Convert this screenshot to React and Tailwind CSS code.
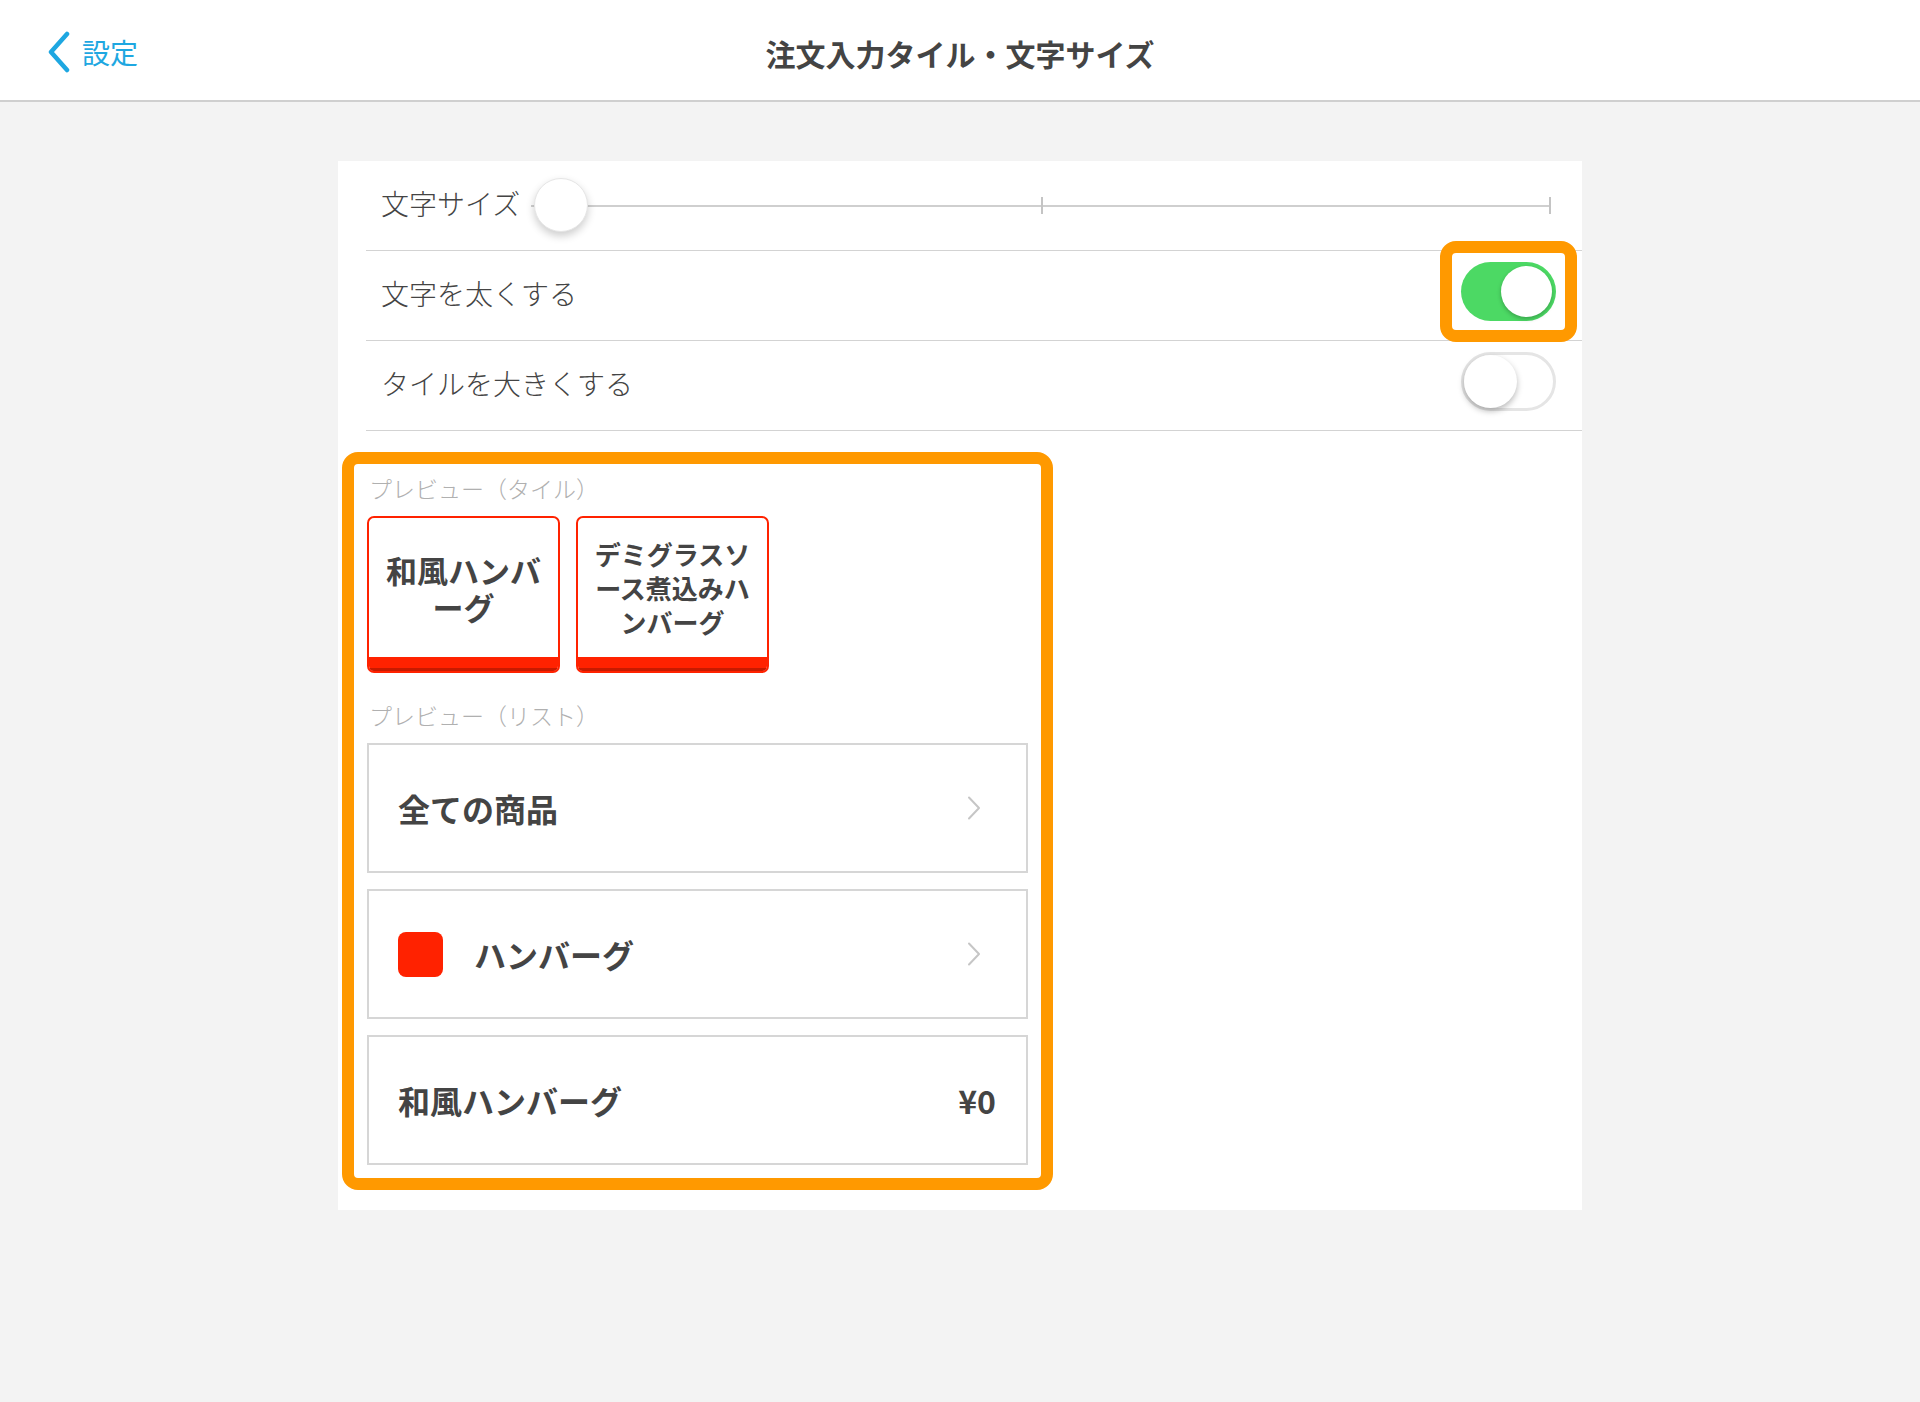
import React from "react";

// 注文入力タイル・文字サイズ settings screen
function Toggle({ on }) {
  if (on) {
    return (
      <div className="w-[95px] h-[59px] rounded-full bg-[#4cd964] p-[4px] flex justify-end">
        <div className="w-[51px] h-[51px] rounded-full bg-white shadow-[0_2px_4px_rgba(0,0,0,0.25)]" />
      </div>
    );
  }
  return (
    <div className="w-[95px] h-[59px] rounded-full bg-white border-[3px] border-[#e5e5e5] flex justify-start">
      <div className="w-[53px] h-[53px] rounded-full bg-white shadow-[0_3px_6px_rgba(0,0,0,0.28)]" />
    </div>
  );
}

function Chevron() {
  return (
    <svg width="14" height="24" viewBox="0 0 14 24" fill="none">
      <path d="M2 1.5 L12 12 L2 22.5" stroke="#c6c6c6" strokeWidth="2" strokeLinecap="round" strokeLinejoin="round" />
    </svg>
  );
}

function Tile({ lines, size }) {
  return (
    <div className="w-[193px] h-[157px] border-2 border-[#ff2200] rounded-[7px] overflow-hidden flex flex-col bg-white">
      <div className={`flex-1 flex flex-col items-center justify-center text-center font-bold text-[#444] ${size}`}>
        {lines.map((l) => (
          <div key={l}>{l}</div>
        ))}
      </div>
      <div className="h-[14px] bg-[#ff2200] border-b-[3px] border-[#c81a00]" />
    </div>
  );
}

function ListRow({ children }) {
  return (
    <div className="h-[130px] border-2 border-[#d6d6d6] bg-white flex items-center text-[32px] font-bold text-[#444]">
      {children}
    </div>
  );
}

export default function App() {
  return (
    <div className="min-h-[1402px] bg-[#f3f3f3] font-['Noto_Sans_CJK_JP',sans-serif]">
      {/* Header */}
      <header className="h-[102px] bg-white border-b-2 border-[#cfcfcf] grid grid-cols-[1fr_auto_1fr] items-center">
        <div className="flex items-center pl-[47px] gap-[11px] pt-[4px]">
          <svg width="24" height="42" viewBox="0 0 24 42" fill="none">
            <path d="M20 3 L4 21 L20 39" stroke="#1ea7e1" strokeWidth="4.5" strokeLinecap="round" strokeLinejoin="round" />
          </svg>
          <span className="text-[28px] text-[#1ea7e1] leading-none">設定</span>
        </div>
        <h1 className="text-[30px] font-bold text-[#444] leading-none pt-[6px]">注文入力タイル・文字サイズ</h1>
        <div />
      </header>

      {/* Card */}
      <main className="pt-[59px]">
        <div className="mx-auto w-[1244px] bg-white pb-[20px]">
          {/* 文字サイズ */}
          <div className="ml-[28px] h-[90px] border-b border-[#d3d3d3] flex items-center pl-[15px]">
            <span className="w-[150px] shrink-0 text-[28px] font-light text-[#444] pb-[5px]">文字サイズ</span>
            <div className="relative flex-1 h-[56px] mr-[31px]">
              <div className="absolute left-0 right-0 top-[27px] h-[2px] bg-[#cfcfcf]" />
              <div className="absolute left-1/2 top-[19px] w-[2px] h-[17px] bg-[#c4c4c4]" />
              <div className="absolute right-0 top-[19px] w-[2px] h-[17px] bg-[#c4c4c4]" />
              <div className="absolute left-[3px] top-0 w-[54px] h-[54px] rounded-full bg-white border border-[#e6e6e6] shadow-[0_4px_8px_rgba(0,0,0,0.2)]" />
            </div>
          </div>

          {/* 文字を太くする */}
          <div className="ml-[28px] h-[90px] border-b border-[#d3d3d3] flex items-center justify-between pl-[15px] pr-[26px]">
            <span className="text-[28px] font-light text-[#444] pb-[5px]">文字を太くする</span>
            <div className="relative mb-[8px]">
              <Toggle on />
              <div className="absolute -inset-[21px] border-[12px] border-[#ff9900] rounded-[16px] pointer-events-none" />
            </div>
          </div>

          {/* タイルを大きくする */}
          <div className="ml-[28px] h-[90px] border-b border-[#d3d3d3] flex items-center justify-between pl-[15px] pr-[26px]">
            <span className="text-[28px] font-light text-[#444] pb-[5px]">タイルを大きくする</span>
            <div className="mb-[8px]">
              <Toggle on={false} />
            </div>
          </div>

          {/* Preview */}
          <div className="ml-[4px] mt-[21px] w-[711px] border-[12px] border-[#ff9900] rounded-[16px] px-[13px] pt-[8px] pb-[13px]">
            <p className="text-[23px] leading-[32px] font-light text-[#b0b0b0] pl-[2px]">プレビュー（タイル）</p>
            <div className="mt-[12px] flex gap-[16px]">
              <Tile size="text-[31px] leading-[37px]" lines={["和風ハンバ", "ーグ"]} />
              <Tile size="text-[26px] leading-[34px]" lines={["デミグラスソ", "ース煮込みハ", "ンバーグ"]} />
            </div>

            <p className="mt-[26px] text-[23px] leading-[32px] font-light text-[#b0b0b0] pl-[2px]">プレビュー（リスト）</p>
            <div className="mt-[12px] flex flex-col gap-[16px]">
              <ListRow>
                <span className="pl-[29px] flex-1">全ての商品</span>
                <span className="pr-[45px]">
                  <Chevron />
                </span>
              </ListRow>
              <ListRow>
                <span className="ml-[29px] w-[45px] h-[45px] rounded-[8px] bg-[#ff2200] shrink-0" />
                <span className="pl-[31px] flex-1">ハンバーグ</span>
                <span className="pr-[45px]">
                  <Chevron />
                </span>
              </ListRow>
              <ListRow>
                <span className="pl-[29px] flex-1">和風ハンバーグ</span>
                <span className="pr-[30px]">¥0</span>
              </ListRow>
            </div>
          </div>
        </div>
      </main>
    </div>
  );
}
